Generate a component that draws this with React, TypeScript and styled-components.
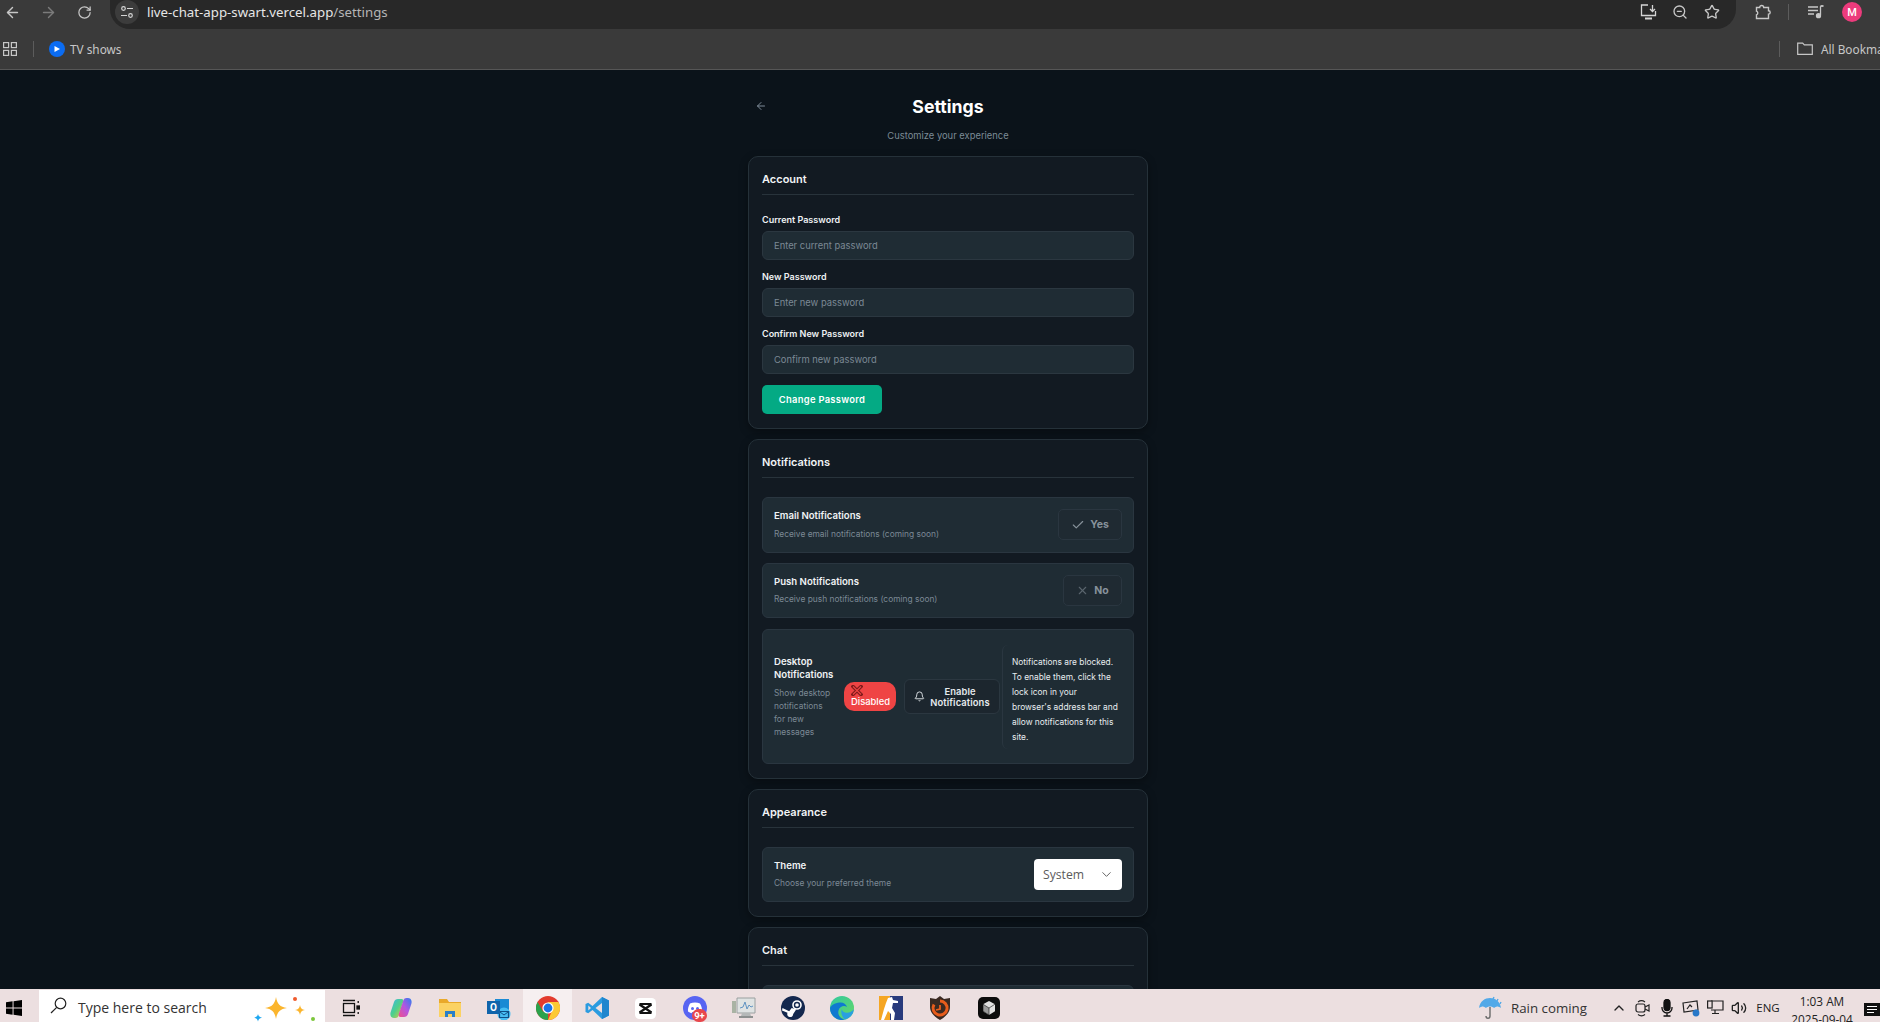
import React from "react";
import styled, { createGlobalStyle } from "styled-components";
import { ArrowLeft, ArrowRight, Bell, Check, ChevronDown, ChevronUp, RotateCw, Star, Volume2, X, ZoomOut } from "lucide-react";

const Global = createGlobalStyle`
  html, body { margin: 0; padding: 0; height: 100%; overflow: hidden; background: #0b131a; }
  * { box-sizing: border-box; }
  #root { height: 100%; }
`;

const Shell = styled.div`
  width: 1880px;
  height: 1022px;
  display: flex;
  flex-direction: column;
  overflow: hidden;
  font-family: Inter, "Noto Sans", sans-serif;
`;

/* ---------- browser chrome ---------- */
const Toolbar = styled.div`
  height: 29px;
  flex: none;
  background: #3a3a3a;
  display: flex;
  align-items: flex-start;
  color: #c7c7c7;
`;
const NavGroup = styled.div`
  display: flex;
  gap: 12px;
  height: 24px;
  align-items: center;
`;
const NavSlot = styled.div<{ $dim?: boolean }>`
  width: 24px;
  height: 24px;
  flex: none;
  display: flex;
  align-items: center;
  justify-content: center;
  color: ${(p) => (p.$dim ? "#7b7b7b" : "#c7c7c7")};
`;
const AddressBar = styled.div`
  flex: 1;
  height: 29px;
  margin: 0 15px 0 14px;
  background: #282828;
  border-radius: 0 0 20px 20px;
  display: flex;
  align-items: center;
  padding: 0 12px 5px 5px;
`;
const SiteButton = styled.div`
  width: 24px;
  height: 24px;
  border-radius: 50%;
  background: #3c3c3c;
  display: flex;
  align-items: center;
  justify-content: center;
  margin-right: 8px;
`;
const Url = styled.div`
  font-family: "Noto Sans", sans-serif;
  font-size: 13.25px;
  color: #e6e6e6;
  flex: 1;
  span { color: #b5b5b5; }
`;
const AddressActions = styled.div`
  display: flex;
  gap: 8px;
`;
const RightGroup = styled.div`
  display: flex;
  align-items: center;
  height: 24px;
  padding-right: 18px;
`;
const Divider = styled.div`
  width: 1px;
  height: 16px;
  background: #5c5c5c;
  margin: 0 15px 0 13px;
`;
const Avatar = styled.div`
  width: 20px;
  height: 20px;
  margin-left: 14px;
  border-radius: 50%;
  background: #ec3b7c;
  color: #fff;
  font: 500 11px Roboto, sans-serif;
  display: flex;
  align-items: center;
  justify-content: center;
`;
const BookmarkBar = styled.div`
  height: 41px;
  flex: none;
  background: #3a3a3a;
  border-bottom: 1px solid #565656;
  display: flex;
  align-items: center;
  padding: 0 0 1px 3px;
  color: #c7c7c7;
  font-family: "Noto Sans", sans-serif;
  font-size: 11.8px;
  overflow: hidden;
`;
const BarSep = styled.div`
  width: 1px;
  height: 16px;
  flex: none;
  background: #5c5c5c;
`;
const AppsSep = styled(BarSep)`
  margin: 0 15px 0 16px;
`;
const TvDot = styled.div`
  width: 16px;
  height: 16px;
  border-radius: 50%;
  background: #0b6cf2;
  display: flex;
  align-items: center;
  justify-content: center;
  margin-right: 5px;
`;
const Spacer = styled.div`
  flex: 1;
`;
const FolderMark = styled.div`
  display: flex;
  flex: none;
  align-items: center;
  gap: 8px;
  margin-left: 17px;
  width: 83px;
  overflow: hidden;
  white-space: nowrap;
  svg { flex: none; }
`;

/* ---------- page ---------- */
const Viewport = styled.main`
  flex: 1;
  min-height: 0;
  overflow: hidden;
  background: #0b131a;
  display: flex;
  flex-direction: column;
  align-items: center;
  padding: 22px 0 0 16px;
`;
const Column = styled.div`
  width: 400px;
  display: flex;
  flex-direction: column;
  flex: none;
`;
const HeaderRow = styled.div`
  position: relative;
  height: 28px;
  display: flex;
  align-items: center;
  justify-content: center;
`;
const BackLink = styled.div`
  position: absolute;
  left: 7px;
  top: 8px;
  color: #7f8c99;
  display: flex;
`;
const Title = styled.h1`
  margin: 0;
  font-size: 17.7px;
  font-weight: 700;
  color: #fff;
`;
const Subtitle = styled.p`
  margin: 9px 0 14px;
  height: 13px;
  line-height: 13px;
  text-align: center;
  color: #7c8b96;
  font-size: 9.4px;
`;
const Card = styled.section`
  background: #121a22;
  border: 1px solid #253139;
  border-radius: 10px;
  padding: 13px 13px 14px;
  margin-bottom: 10px;
  box-shadow: 0 3px 8px rgba(0, 0, 0, 0.35);
`;
const CardTitle = styled.h2`
  margin: 0 0 19px;
  height: 25px;
  padding-bottom: 7px;
  line-height: 18px;
  border-bottom: 1px solid #28333b;
  font-size: 11px;
  font-weight: 600;
  color: #f0f3f5;
`;
const Field = styled.div`
  margin-bottom: 11px;
`;
const FieldLabel = styled.label`
  display: block;
  height: 17px;
  line-height: 12px;
  font-size: 9px;
  font-weight: 600;
  color: #eef1f3;
`;
const TextInput = styled.input`
  display: block;
  width: 100%;
  height: 29px;
  padding: 0 11px;
  background: #1f2c34;
  border: 1px solid #2b3740;
  border-radius: 6px;
  outline: none;
  font: 400 9.4px Inter, sans-serif;
  color: #eef1f3;
  &::placeholder { color: #7c8994; opacity: 1; }
`;
const PrimaryButton = styled.button`
  display: block;
  width: 120px;
  height: 29px;
  background: #04aa84;
  border: none;
  border-radius: 5px;
  color: #fff;
  font: 600 9.4px Inter, sans-serif;
  letter-spacing: 0.3px;
`;
const Row = styled.div<{ $h?: number; $gap?: number }>`
  height: ${(p) => p.$h ?? 56}px;
  margin-bottom: ${(p) => p.$gap ?? 0}px;
  background: #1f2c34;
  border: 1px solid #2a3640;
  border-radius: 6px;
  padding: 0 11px;
  display: flex;
  align-items: center;
  justify-content: space-between;
`;
const RowText = styled.div<{ $narrow?: boolean }>`
  display: flex;
  flex-direction: column;
  width: ${(p) => (p.$narrow ? "64px" : "auto")};
  flex: none;
`;
const RowTitle = styled.div`
  font-size: 9.6px;
  font-weight: 600;
  line-height: 13.5px;
  color: #f0f3f5;
`;
const RowDesc = styled.div<{ $max?: number }>`
  margin-top: 5px;
  max-width: ${(p) => (p.$max ? `${p.$max}px` : "none")};
  font-size: 8.4px;
  line-height: 13px;
  color: #7c8994;
`;
const Toggle = styled.div<{ $w: number }>`
  width: ${(p) => p.$w}px;
  height: 31px;
  margin-bottom: 1px;
  border: 1px solid #2a3640;
  border-radius: 5px;
  background: #1f2a32;
  display: flex;
  align-items: center;
  justify-content: center;
  gap: 5px;
  font-size: 10.5px;
  font-weight: 700;
  color: #87929b;
`;
const DesktopRow = styled(Row)`
  justify-content: flex-start;
`;
const Badge = styled.div`
  width: 52px;
  height: 29px;
  margin-left: 6px;
  flex: none;
  border-radius: 10px;
  background: #ef4444;
  color: #fff;
  font-size: 9.4px;
  font-weight: 500;
  padding: 3px 0 0 7px;
  line-height: 11px;
  svg { display: block; }
`;
const OutlineButton = styled.div`
  width: 96px;
  height: 35px;
  margin-left: 8px;
  flex: none;
  border: 1px solid #2b3740;
  border-radius: 6px;
  background: #1c262e;
  display: flex;
  align-items: center;
  justify-content: center;
  gap: 5px;
  color: #e6eaed;
  font-size: 9.4px;
  font-weight: 600;
  letter-spacing: 0.1px;
  line-height: 11px;
  text-align: center;
  svg { flex: none; }
`;
const Hint = styled.div`
  margin-left: 2px;
  padding: 10px 0 4px 9px;
  height: 104px;
  flex: none;
  width: 114px;
  border-left: 1px solid #2a3640;
  border-radius: 6px;
  color: #e8edf0;
  font-size: 8.4px;
  line-height: 15px;
  white-space: nowrap;
`;
const SelectBox = styled.div`
  width: 88px;
  height: 31px;
  margin-bottom: 1px;
  background: #fff;
  border-radius: 4px;
  padding: 0 8px 0 9px;
  display: flex;
  align-items: center;
  justify-content: space-between;
  color: #5b5b5b;
  font: 400 12.2px "Open Sans", sans-serif;
`;

/* ---------- taskbar ---------- */
const Taskbar = styled.footer`
  height: 33px;
  flex: none;
  background: #ecdfe0;
  display: flex;
  align-items: flex-start;
  overflow: hidden;
  color: #222;
  font-family: "Open Sans", sans-serif;
`;
const StartSlot = styled.div`
  width: 39px;
  height: 33px;
  display: flex;
  align-items: center;
  justify-content: center;
  padding: 4px 11px 0 0;
`;
const SearchBox = styled.div`
  width: 286px;
  height: 40px;
  margin-top: 1px;
  background: #fff;
  display: flex;
  align-items: flex-start;
  padding: 7px 2px 0 11px;
  font-size: 14px;
  color: #333;
`;
const SearchText = styled.span`
  margin-left: 11px;
  flex: 1;
  line-height: 22px;
`;
const AppSlot = styled.div<{ $active?: boolean; $w?: number }>`
  width: ${(p) => p.$w ?? 49}px;
  height: 33px;
  flex: none;
  background: ${(p) => (p.$active ? "#f6eff0" : "transparent")};
  display: flex;
  align-items: center;
  justify-content: center;
  padding-top: 5px;
  position: relative;
`;
const Notif = styled.span`
  position: absolute;
  right: 12px;
  bottom: 0;
  min-width: 15px;
  height: 13px;
  border-radius: 7px;
  background: #e8474c;
  color: #fff;
  font: 700 9.5px/13px Roboto, sans-serif;
  text-align: center;
`;
const TrayArea = styled.div`
  margin-left: auto;
  display: flex;
  align-items: flex-start;
  height: 33px;
`;
const Weather = styled.div`
  display: flex;
  align-items: center;
  gap: 9px;
  height: 33px;
  padding-top: 5px;
  margin-right: 20px;
  font-size: 13.3px;
  color: #333;
`;
const TraySlot = styled.div`
  width: 24px;
  height: 33px;
  display: flex;
  align-items: center;
  justify-content: center;
  padding-top: 4px;
  color: #222;
`;
const Lang = styled.div`
  width: 34px;
  height: 33px;
  padding-top: 4px;
  display: flex;
  align-items: center;
  justify-content: center;
  font-size: 11.5px;
`;
const Clock = styled.div`
  width: 66px;
  margin-left: 4px;
  padding-top: 3px;
  text-align: center;
  font-size: 11.8px;
  line-height: 18px;
  white-space: nowrap;
`;
const NotifySlot = styled.div`
  width: 20px;
  margin-left: 5px;
  height: 33px;
  padding: 14px 0 0 4px;
`;

/* ---------- drawings ---------- */
const Sliders = () => (
  <svg width="14" height="14" viewBox="0 0 14 14" fill="none" stroke="#d5d5d5" strokeWidth="1.2">
    <circle cx="3.5" cy="3.5" r="1.8" />
    <path d="M7 3.5h6M1 10.5h6" />
    <circle cx="10.5" cy="10.5" r="1.8" />
  </svg>
);
const InstallIcon = () => (
  <svg width="17" height="16" viewBox="0 0 17 16" fill="none" stroke="#d5d5d5" strokeWidth="1.3">
    <path d="M8 1H1.5v10.5h14V7" />
    <path d="M5 14.5h7" strokeWidth="2" />
    <path d="M12.5 1v6M10 5l2.5 2.5L15 5" />
  </svg>
);
const ExtensionIcon = () => (
  <svg width="16" height="16" viewBox="0 0 16 16" fill="none" stroke="#c7c7c7" strokeWidth="1.4">
    <path d="M1.5 3.5h3.2a2 2 0 0 1 4 0h4.800v3.200a1.700 1.700 0 0 1 0 3.400v4.400H1.500v-3.700a1.900 1.900 0 0 0 0-3.600z" />
  </svg>
);
const MediaIcon = () => (
  <svg width="16" height="14" viewBox="0 0 16 14" fill="none" stroke="#c7c7c7" strokeWidth="1.3">
    <path d="M0 2h10M0 5.500h10M0 9h6" />
    <path d="M12.500 1.200V10" />
    <path d="M12.500 1h3" strokeWidth="1.800" />
    <circle cx="10.500" cy="10.700" r="2" fill="#c7c7c7" />
  </svg>
);
const AppsGrid = () => (
  <svg width="14" height="14" viewBox="0 0 14 14" fill="none" stroke="#c7c7c7" strokeWidth="1.2">
    <rect x="0.6" y="0.6" width="5" height="5" />
    <rect x="8.4" y="0.6" width="5" height="5" />
    <rect x="0.6" y="8.4" width="5" height="5" />
    <rect x="8.4" y="8.4" width="5" height="5" />
  </svg>
);
const Play = () => (
  <svg width="8" height="8" viewBox="0 0 8 8"><path d="M1.500 1l5.500 3-5.500 3z" fill="#fff" /></svg>
);
const FolderOutline = () => (
  <svg width="16" height="13" viewBox="0 0 16 13" fill="none" stroke="#c7c7c7" strokeWidth="1.2">
    <path d="M.7 1.200h5l1.600 1.700h8v9.400H.7z" />
  </svg>
);
const DisabledX = () => (
  <svg width="12" height="11" viewBox="0 0 12 11">
    <path d="M2 1.500l8 8M10 1.500l-8 8" stroke="#7d1a1a" strokeWidth="3.400" strokeLinecap="square" />
    <path d="M2 1.500l8 8M10 1.500l-8 8" stroke="#ef4444" strokeWidth="1.100" />
  </svg>
);
const WindowsLogo = () => (
  <svg width="16" height="16" viewBox="0 0 17 17" fill="#000">
    <path d="M0 2.400l7-1v6.600H0zM8 1.200L17 0v8H8zM0 9h7v6.600l-7-1zM8 9h9v8l-9-1.200z" />
  </svg>
);
const SearchGlass = () => (
  <svg width="17" height="17" viewBox="0 0 17 17" fill="none" stroke="#222" strokeWidth="1.200">
    <circle cx="10.500" cy="6.500" r="5.300" />
    <path d="M6.700 10.300L1 16" />
  </svg>
);
const TaskViewIcon = () => (
  <svg width="18" height="18" viewBox="0 0 18 18" fill="none" stroke="#111" strokeWidth="1.3">
    <path d="M1 1.500h12M1 16.500h12" />
    <rect x="1.500" y="4.500" width="11" height="9" />
    <rect x="15" y="7" width="2.500" height="3" fill="#111" />
    <path d="M16.200 2v2M16.200 13v2" />
  </svg>
);
const CopilotLogo = () => (
  <svg width="24" height="24" viewBox="0 0 24 24">
    <defs>
      <linearGradient id="cp1" x1="0" y1="0" x2="1" y2="1">
        <stop offset="0" stopColor="#38b6e8" /><stop offset="0.5" stopColor="#4fd08a" /><stop offset="1" stopColor="#f5c33b" />
      </linearGradient>
      <linearGradient id="cp2" x1="1" y1="0" x2="0" y2="1">
        <stop offset="0" stopColor="#2b7ff0" /><stop offset="0.5" stopColor="#b455e0" /><stop offset="1" stopColor="#f0508a" />
      </linearGradient>
    </defs>
    <path d="M9 3h3.500c1.700 0 2.300 1.500 1.700 3L9.500 20c-.5 1.300-1.500 2-3 2H5c-3 0-4.300-3-3.300-6L5 6c.6-2 2-3 4-3z" fill="url(#cp1)" />
    <path d="M15 21h-3.500c-1.700 0-2.300-1.500-1.700-3l4.700-14c.5-1.300 1.500-2 3-2H19c3 0 4.300 3 3.300 6L19 18c-.6 2-2 3-4 3z" fill="url(#cp2)" />
  </svg>
);
const FolderLogo = () => (
  <svg width="22" height="20" viewBox="0 0 22 20">
    <path d="M0 1h8l2 3h12v15H0z" fill="#e9a92a" />
    <path d="M0 5h22v14H0z" fill="#fbd263" />
    <path d="M6 19v-6h10v6h-3v-3H9v3z" fill="#2a7fc9" />
  </svg>
);
const OutlookLogo = () => (
  <svg width="24" height="24" viewBox="0 0 24 24">
    <path d="M8 3h14v14H8z" fill="#1a8ad4" />
    <circle cx="17" cy="18" r="6.500" fill="#48bdf2" />
    <path d="M12.500 15.500h9v6h-9z" fill="none" stroke="#0f4f86" strokeWidth="1.200" />
    <path d="M13 16l4 3 4-3" fill="none" stroke="#0f4f86" strokeWidth="1" />
    <path d="M0 5h13v13H0z" fill="#0f64ab" />
    <text x="6.500" y="15" fontSize="10" fontWeight="700" textAnchor="middle" fill="#fff" fontFamily="Roboto">O</text>
  </svg>
);
const ChromeLogo = () => (
  <svg width="24" height="24" viewBox="0 0 24 24">
    <circle cx="12" cy="12" r="12" fill="#e33b2e" />
    <path d="M12 24A12 12 0 0 1 1.600 6L7 15.500l5 .5z" fill="#2ba24c" />
    <path d="M12 24A12 12 0 0 0 22.400 6H12l4 9z" fill="#fcc934" />
    <circle cx="12" cy="12" r="5.600" fill="#fff" />
    <circle cx="12" cy="12" r="4.400" fill="#1a73e8" />
  </svg>
);
const VsCodeLogo = () => (
  <svg width="24" height="24" viewBox="0 0 24 24">
    <path d="M17 1l7 3.400v15.200L17 23 7.500 14l-4.300 3.300L.5 16V8l2.700-1.300L7.500 10z" fill="#2a9be0" />
    <path d="M17 1l7 3.400v15.200L17 23z" fill="#1f86ce" />
    <path d="M17 7l-6.500 5 6.500 5z" fill="#ecdfe0" />
    <path d="M3.300 9.500L6 12l-2.700 2.500z" fill="#ecdfe0" />
  </svg>
);
const CapCutLogo = () => (
  <svg width="21" height="21" viewBox="0 0 21 21">
    <rect width="21" height="21" rx="4.500" fill="#fff" />
    <path d="M4.500 6.500l12 8M16.500 6.500l-12 8" stroke="#111" strokeWidth="2.200" fill="none" />
    <path d="M4.500 6h12M4.500 15h12" stroke="#111" strokeWidth="2.200" />
  </svg>
);
const DiscordLogo = () => (
  <svg width="24" height="24" viewBox="0 0 24 24">
    <circle cx="12" cy="12" r="12" fill="#5865f2" />
    <path d="M7 7.500c3-1.200 7-1.200 10 0 1.500 2.500 2.300 5.200 2 8-1.200.9-2.400 1.400-3.500 1.700l-.8-1.300c-2 .5-3.400.5-5.400 0l-.8 1.300c-1.100-.3-2.300-.8-3.500-1.700-.3-2.800.5-5.500 2-8z" fill="#fff" />
    <circle cx="9.500" cy="12.500" r="1.500" fill="#5865f2" />
    <circle cx="14.500" cy="12.500" r="1.500" fill="#5865f2" />
  </svg>
);
const MonitorLogo = () => (
  <svg width="24" height="24" viewBox="0 0 24 24">
    <path d="M5 2h18v15H5z" fill="#dfe3e3" stroke="#9aa0a0" />
    <path d="M8 12l3-1 2-5 2 7 2-4 2 2 2-1" fill="none" stroke="#5f93c2" strokeWidth="1" />
    <path d="M0 5h4v12H0z" fill="#a9b3a4" />
    <path d="M10 17h8l1 3H9z" fill="#b4b8b8" />
    <path d="M7 20h14v2H7z" fill="#8c9090" />
  </svg>
);
const SteamLogo = () => (
  <svg width="24" height="24" viewBox="0 0 24 24">
    <circle cx="12" cy="12" r="12" fill="#14284e" />
    <circle cx="16" cy="9" r="4" fill="none" stroke="#fff" strokeWidth="1.600" />
    <circle cx="16" cy="9" r="1.800" fill="#fff" />
    <path d="M1 14.500l5.500 2.300a3 3 0 1 0 5.700 1.200l3-4.500-4.500-1.500-2.500 3.300L1.500 12z" fill="#fff" />
  </svg>
);
const EdgeLogo = () => (
  <svg width="24" height="24" viewBox="0 0 24 24">
    <defs>
      <linearGradient id="ed1" x1="0" y1="0" x2="1" y2="1">
        <stop offset="0" stopColor="#32c8a0" /><stop offset="1" stopColor="#66d866" />
      </linearGradient>
    </defs>
    <circle cx="12" cy="12" r="12" fill="url(#ed1)" />
    <path d="M0 12A12 12 0 0 0 15 23.600c-5-1-7.500-5-6.500-9.100C9.500 10.500 14 9 17 11c-.8-3-4-5-7.500-4.500C4.500 7 1 9.500 0 12z" fill="#0f7ad0" />
    <path d="M15 23.600A12 12 0 0 0 24 13c-2 3-6 4.500-9 3.500-3.500-1-3-3.500-3-3.500-2 3 .5 9 3 10.600z" fill="#2a9fe0" />
  </svg>
);
const CsLogo = () => (
  <svg width="24" height="24" viewBox="0 0 24 24">
    <path d="M0 0h11v24H0z" fill="#f5a623" />
    <path d="M11 0h13v24H11z" fill="#283a7c" />
    <path d="M9 2l4-1 1 3 5 1v2l-5 0-1 5 3 5-1 7h-3l0-6-3-3-4 9H2l3-11 2-6z" fill="#fff" />
  </svg>
);
const ShieldLogo = () => (
  <svg width="24" height="24" viewBox="0 0 24 24">
    <path d="M12 0l4 3 6-1v9c0 6-5 10-10 13C7 21 2 17 2 11V2l6 1z" fill="#3a2a22" />
    <path d="M12 5a7 7 0 1 1-6 3.500" fill="none" stroke="#e85d1c" strokeWidth="3" />
    <path d="M12 9v4l-4 1" fill="none" stroke="#e85d1c" strokeWidth="1.800" />
  </svg>
);
const CubeLogo = () => (
  <svg width="22" height="22" viewBox="0 0 22 22">
    <rect width="22" height="22" rx="5" fill="#0c0c0c" />
    <path d="M11 4l6 3.200v7L11 18l-6-3.800v-7z" fill="#dfdfdf" />
    <path d="M11 11v7l-6-3.800v-7zM11 11l6-3.800" fill="#9a9a9a" stroke="#111" strokeWidth=".6" />
  </svg>
);
const Sparkles = () => (
  <svg width="70" height="28" viewBox="0 0 70 28">
    <path d="M23 0c1.200 7 4 10 11 11-7 1-9.800 4-11 11-1.200-7-4-10-11-11 7-1 9.800-4 11-11z" fill="#fbb52d" />
    <path d="M47 8c.5 3 1.700 4.400 5 5-3.300.6-4.500 2-5 5-.5-3-1.700-4.400-5-5 3.300-.6 4.500-2 5-5z" fill="#fbb52d" />
    <path d="M5 17c.4 2 1.200 3 4 3.700-2.800.7-3.600 1.700-4 3.700-.4-2-1.200-3-4-3.700 2.800-.7 3.600-1.700 4-3.700z" fill="#1ea7f0" />
    <circle cx="42" cy="2" r="2" fill="#ef5a2d" />
    <circle cx="60" cy="22" r="2" fill="#7cc73c" />
  </svg>
);
const Umbrella = () => (
  <svg width="24" height="26" viewBox="0 0 24 26" fill="none">
    <path d="M1 13C2 6 7 3 12 3s10 3 11 10c-3-2-5-2-7 0-2-2-6-2-8 0-2-2-4-2-7 0z" fill="#52a9e8" />
    <path d="M12 12v9c0 3-4 3-4 0" stroke="#6a6a6a" strokeWidth="1.400" />
    <path d="M15 4l1-2M19 6l1-2M22 9l1-2" stroke="#52a9e8" strokeWidth="1.400" />
  </svg>
);
const MeetIcon = () => (
  <svg width="16" height="18" viewBox="0 0 16 18" fill="none" stroke="#222" strokeWidth="1.200">
    <rect x="1" y="5" width="9" height="8" rx="2" />
    <path d="M10 8l4-2v6l-4-2" />
    <path d="M3 3c2-1.500 5-1.500 7 0M3 15.500c2 1.500 5 1.500 7 0" />
  </svg>
);
const MicFilled = () => (
  <svg width="12" height="18" viewBox="0 0 12 18" fill="none" stroke="#111" strokeWidth="1.300">
    <rect x="3" y="0.500" width="6" height="11" rx="3" fill="#111" />
    <path d="M1 8v1a5 5 0 0 0 10 0V8M6 14v3M2.500 17h7" />
  </svg>
);
const CaptureIcon = () => (
  <svg width="20" height="18" viewBox="0 0 20 18" fill="none" stroke="#222" strokeWidth="1.200">
    <path d="M2 4l14-2 1 9-14 2z" />
    <path d="M6 10l3-4 2 2" />
    <circle cx="15" cy="14" r="3.400" fill="#2878c8" stroke="none" />
  </svg>
);
const NetIcon = () => (
  <svg width="17" height="15" viewBox="0 0 17 15" fill="none" stroke="#222" strokeWidth="1.200">
    <path d="M4 1h12v9H4M8 10v3M5 13.500h7" />
    <rect x="0.600" y="1" width="4.500" height="7" fill="#ecdfe0" />
  </svg>
);
const NotifyIcon = () => (
  <svg width="16" height="19" viewBox="0 0 16 19">
    <path d="M0 0h16v13H0z" fill="#111" />
    <path d="M3 3.500h10M3 6.500h10M3 9.500h7" stroke="#fff" strokeWidth="1" />
  </svg>
);

const apps: { node: React.ReactNode; active?: boolean; badge?: string }[] = [
  { node: <CopilotLogo /> },
  { node: <FolderLogo /> },
  { node: <OutlookLogo /> },
  { node: <ChromeLogo />, active: true },
  { node: <VsCodeLogo /> },
  { node: <CapCutLogo /> },
  { node: <DiscordLogo />, badge: "9+" },
  { node: <MonitorLogo /> },
  { node: <SteamLogo /> },
  { node: <EdgeLogo /> },
  { node: <CsLogo /> },
  { node: <ShieldLogo /> },
  { node: <CubeLogo /> },
];

const passwordFields = [
  { label: "Current Password", placeholder: "Enter current password" },
  { label: "New Password", placeholder: "Enter new password" },
  { label: "Confirm New Password", placeholder: "Confirm new password" },
];

export default function App() {
  return (
    <Shell>
      <Global />
      <Toolbar>
        <NavGroup>
          <NavSlot><ArrowLeft size={17} /></NavSlot>
          <NavSlot $dim><ArrowRight size={17} /></NavSlot>
          <NavSlot><RotateCw size={15} /></NavSlot>
        </NavGroup>
        <AddressBar>
          <SiteButton><Sliders /></SiteButton>
          <Url>live-chat-app-swart.vercel.app<span>/settings</span></Url>
          <AddressActions>
            <NavSlot><InstallIcon /></NavSlot>
            <NavSlot><ZoomOut size={16} /></NavSlot>
            <NavSlot><Star size={16} /></NavSlot>
          </AddressActions>
        </AddressBar>
        <RightGroup>
          <NavSlot><ExtensionIcon /></NavSlot>
          <Divider />
          <NavSlot><MediaIcon /></NavSlot>
          <Avatar>M</Avatar>
        </RightGroup>
      </Toolbar>
      <BookmarkBar>
        <AppsGrid />
        <AppsSep />
        <TvDot><Play /></TvDot>
        TV shows
        <Spacer />
        <BarSep />
        <FolderMark><FolderOutline />All Bookmarks</FolderMark>
      </BookmarkBar>

      <Viewport>
        <Column>
          <HeaderRow>
            <BackLink><ArrowLeft size={12} /></BackLink>
            <Title>Settings</Title>
          </HeaderRow>
          <Subtitle>Customize your experience</Subtitle>

          <Card>
            <CardTitle>Account</CardTitle>
            {passwordFields.map((f) => (
              <Field key={f.label}>
                <FieldLabel>{f.label}</FieldLabel>
                <TextInput type="password" placeholder={f.placeholder} />
              </Field>
            ))}
            <PrimaryButton>Change Password</PrimaryButton>
          </Card>

          <Card>
            <CardTitle>Notifications</CardTitle>
            <Row $gap={10}>
              <RowText>
                <RowTitle>Email Notifications</RowTitle>
                <RowDesc>Receive email notifications (coming soon)</RowDesc>
              </RowText>
              <Toggle $w={64}><Check size={14} />Yes</Toggle>
            </Row>
            <Row $h={55} $gap={11}>
              <RowText>
                <RowTitle>Push Notifications</RowTitle>
                <RowDesc>Receive push notifications (coming soon)</RowDesc>
              </RowText>
              <Toggle $w={59}><X size={13} color="#5a656e" />No</Toggle>
            </Row>
            <DesktopRow $h={135}>
              <RowText $narrow>
                <RowTitle>Desktop Notifications</RowTitle>
                <RowDesc $max={60}>Show desktop notifications for new messages</RowDesc>
              </RowText>
              <Badge><DisabledX />Disabled</Badge>
              <OutlineButton>
                <Bell size={11} />
                <span>Enable<br />Notifications</span>
              </OutlineButton>
              <Hint>
                Notifications are blocked.<br />
                To enable them, click the<br />
                lock icon in your<br />
                browser's address bar and<br />
                allow notifications for this<br />
                site.
              </Hint>
            </DesktopRow>
          </Card>

          <Card>
            <CardTitle>Appearance</CardTitle>
            <Row $h={55}>
              <RowText>
                <RowTitle>Theme</RowTitle>
                <RowDesc>Choose your preferred theme</RowDesc>
              </RowText>
              <SelectBox>System<ChevronDown size={15} color="#666" strokeWidth={1.6} /></SelectBox>
            </Row>
          </Card>

          <Card>
            <CardTitle>Chat</CardTitle>
            <Row />
          </Card>
        </Column>
      </Viewport>

      <Taskbar>
        <StartSlot><WindowsLogo /></StartSlot>
        <SearchBox>
          <SearchGlass />
          <SearchText>Type here to search</SearchText>
          <Sparkles />
        </SearchBox>
        <AppSlot $w={51}><TaskViewIcon /></AppSlot>
        {apps.map((a, i) => (
          <AppSlot key={i} $active={a.active}>
            {a.node}
            {a.badge && <Notif>{a.badge}</Notif>}
          </AppSlot>
        ))}
        <TrayArea>
          <Weather><Umbrella />Rain coming</Weather>
          <TraySlot><ChevronUp size={16} /></TraySlot>
          <TraySlot><MeetIcon /></TraySlot>
          <TraySlot><MicFilled /></TraySlot>
          <TraySlot><CaptureIcon /></TraySlot>
          <TraySlot><NetIcon /></TraySlot>
          <TraySlot><Volume2 size={16} /></TraySlot>
          <Lang>ENG</Lang>
          <Clock>1:03 AM<br />2025-09-04</Clock>
          <NotifySlot><NotifyIcon /></NotifySlot>
        </TrayArea>
      </Taskbar>
    </Shell>
  );
}
